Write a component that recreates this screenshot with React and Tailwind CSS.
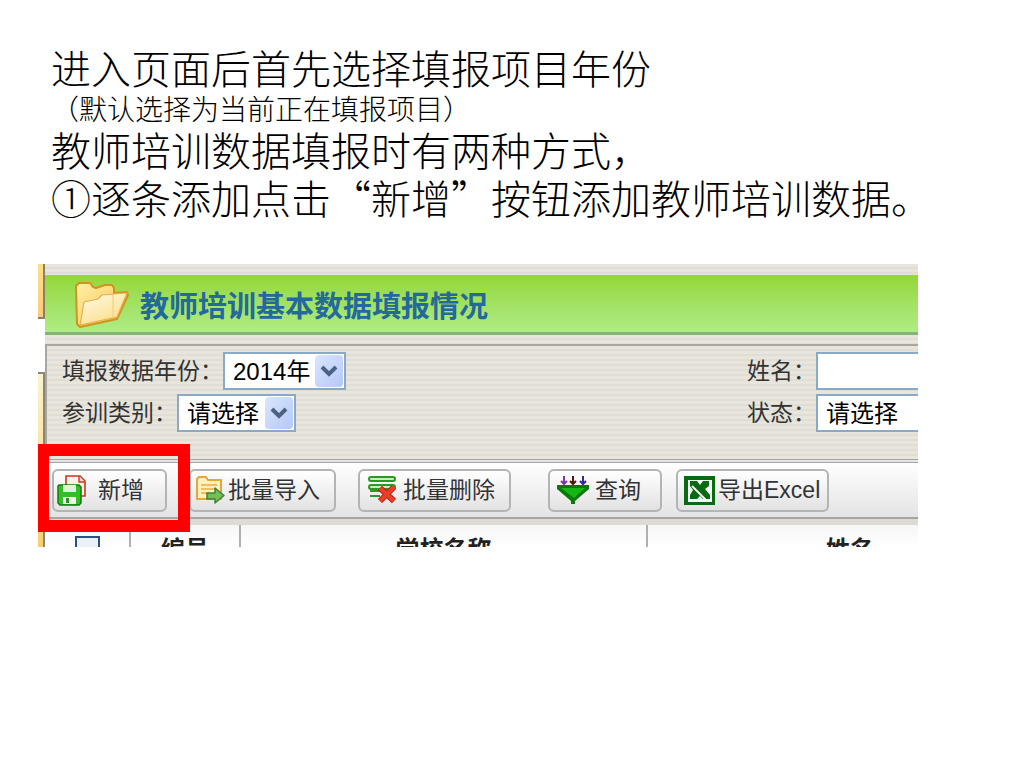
import clsx from 'clsx';

const STRIPES = 'bg-[repeating-linear-gradient(to_bottom,#e8e5dd_0px,#e8e5dd_3px,#e0ddd5_3px,#e0ddd5_5px)]';

function FolderIcon() {
    return (
        <svg width="56" height="48" viewBox="0 0 56 48" aria-hidden="true">
            <defs>
                <linearGradient id="folderBack" x1="0" y1="0" x2="1" y2="1">
                    <stop offset="0" stopColor="#fff0a8" />
                    <stop offset="1" stopColor="#f6bd45" />
                </linearGradient>
                <linearGradient id="folderFront" x1="0" y1="0" x2="0.6" y2="1">
                    <stop offset="0" stopColor="#fffbe8" />
                    <stop offset="1" stopColor="#fddf8c" />
                </linearGradient>
            </defs>
            <path d="M2 5 L5 2 H16 L19 6 L22 7 L31 4 H38 L40 7 V12 L53 11 L54 14 L43 38 L6 46 L3 43 Z" fill="url(#folderBack)" stroke="#cf9420" strokeWidth="2" strokeLinejoin="round" />
            <path d="M10 21 L24 18 L28 14 L53 12 L43 36 L6 44 Z" fill="url(#folderFront)" stroke="#e5b04c" strokeWidth="1.2" strokeLinejoin="round" />
            <path d="M39 14 V36" stroke="#f7d58a" strokeWidth="1.5" />
        </svg>
    );
}

function AddIcon() {
    return (
        <svg width="31" height="32" viewBox="0 0 31 32" aria-hidden="true">
            <path d="M9 2 H23 L28 7 V22 H9 Z" fill="#fff1ea" stroke="#c23a22" strokeWidth="1.6" />
            <path d="M22 2 V8 H28" fill="#fbd9cc" stroke="#c23a22" strokeWidth="1.4" />
            <path d="M2 11 H22 L24 13 V29 L22 31 H3 L1 29 V12 Z" fill="#35bd26" stroke="#137a12" strokeWidth="1.5" />
            <path d="M6 11 H19 V18 H6 Z" fill="#dff3d8" />
            <path d="M6 23 H19 V30 H6 Z" fill="#effbea" />
            <path d="M9 24 H12 V29 H9 Z" fill="#26961b" />
        </svg>
    );
}

function ImportIcon() {
    return (
        <svg width="30" height="28" viewBox="0 0 30 28" aria-hidden="true">
            <path d="M2 23 V3 L4 1 H11 L13 4 H26 V23 Z" fill="#fff0bd" stroke="#e3a73c" strokeWidth="2" strokeLinejoin="round" />
            <path d="M6 9 H22 M6 13 H20 M6 17 H14" stroke="#efbd5a" strokeWidth="1.8" />
            <path d="M12 17 H20 V12 L29 19.500 L20 27 V23 H12 Z" fill="#79bd5b" stroke="#3f8436" strokeWidth="1.5" strokeLinejoin="round" />
        </svg>
    );
}

function DeleteIcon() {
    return (
        <svg width="29" height="30" viewBox="0 0 29 30" aria-hidden="true">
            <g fill="#c9efb9" stroke="#2a9a25" strokeWidth="2">
                <rect x="1" y="2" width="26" height="4" rx="2" />
                <rect x="1" y="10" width="26" height="4" rx="2" />
                <path d="M2 16 H14 M2 21 H12" />
            </g>
            <path d="M12 13 L26 26 M26 12 L12 26" stroke="#b51f12" strokeWidth="6" />
            <path d="M12 13 L26 26 M26 12 L12 26" stroke="#ea3e26" strokeWidth="4" />
        </svg>
    );
}

function FilterIcon() {
    return (
        <svg width="32" height="28" viewBox="0 0 32 28" aria-hidden="true">
            <path d="M0 9 H32 V13 L18 25 V28 H14 V25 L0 13 Z" fill="#087a0c" />
            <path d="M4 12 H28 L17 22 Z" fill="#14b814" />
            <g strokeWidth="2" fill="none">
                <path d="M7 0 V8 M4 5 L7 8 L10 5" stroke="#7c35b5" />
                <path d="M16 0 V8 M13 5 L16 8 L19 5" stroke="#4d1717" />
                <path d="M26 0 V8 M23 5 L26 8 L29 5" stroke="#2c2c9c" />
            </g>
        </svg>
    );
}

function ExcelIcon() {
    return (
        <svg width="31" height="29" viewBox="0 0 31 29" aria-hidden="true">
            <rect width="31" height="29" fill="#0a6a12" />
            <rect x="4" y="4" width="24" height="22" fill="#f3faf2" />
            <path d="M6 5 H13 L16 9 L19 5 H25 V10 L21 13 L26 19 V23 H19 L16 20 L13 23 H6 V19 L9 14 L6 10 Z" fill="#0a6a12" />
            <path d="M8 10 L22 24 M24 24 H28" stroke="#f3faf2" strokeWidth="1.8" />
        </svg>
    );
}

function SelectBox({ id, value, className }) {
    return (
        <div className={clsx('relative shrink-0', className)}>
            <select id={id} className="block h-[38px] w-full appearance-none border-2 border-[#8aa9c6] bg-white pt-[2px] pl-2 text-[24px] leading-8 text-black">
                <option>{value}</option>
            </select>
            <span className="pointer-events-none absolute top-[3px] right-[3px] flex h-8 w-7 items-center justify-center rounded-sm bg-linear-to-br from-[#dbe6fd] to-[#b3c8f6]">
                <svg width="18" height="12" viewBox="0 0 18 12" aria-hidden="true">
                    <path d="M2 2 L9 9 L16 2" fill="none" stroke="#4d6185" strokeWidth="4" />
                </svg>
            </span>
        </div>
    );
}

function ToolButton({ icon, label, className }) {
    return (
        <button
            type="button"
            className={clsx(
                'flex h-[43px] shrink-0 items-center rounded-md border-2 border-[#b4b4b4] bg-linear-to-b from-white to-[#e2e2e2] text-[23px] leading-8 whitespace-nowrap text-[#333]',
                className
            )}
        >
            {icon}
            {label}
        </button>
    );
}

export default function App() {
    return (
        <main lang="zh-CN" className="min-h-screen overflow-hidden bg-white font-['Noto_Sans_CJK_SC',sans-serif] text-black">
            {/* 操作说明 */}
            <section className="pt-[43px] pl-[51px] text-[40px] leading-[48px] font-light whitespace-nowrap">
                <h1>进入页面后首先选择填报项目年份</h1>
                <p className="text-[28px] leading-[34px]">（默认选择为当前正在填报项目）</p>
                <p>教师培训数据填报时有两种方式，</p>
                <p>①逐条添加点击“新增”按钮添加教师培训数据。</p>
            </section>

            <section className="relative mt-[43px] mr-[106px] ml-[38px] flex overflow-hidden font-['Liberation_Sans','Noto_Sans_CJK_SC',sans-serif]">
                {/* 左侧菜单边缘 */}
                <div className="flex w-[7px] shrink-0 flex-col">
                    <div className="h-[55px] border-r-2 border-b-2 border-[#8d8062] bg-linear-to-b from-[#fbe08a] to-[#fbcb7c]" />
                    <div className="h-[53px]" />
                    <div className="grow border-t-2 border-r-2 border-[#89857a] bg-linear-to-b from-[#f9f4cd] to-[#f8cf6e]" />
                </div>

                <div className="min-w-0 grow">
                    <div className={clsx('h-[11px]', STRIPES)} />
                    <header className="flex h-[60px] items-center gap-[10px] border-b-3 border-[#84b47c] bg-linear-to-b from-[#94d733] to-[#afec85] pt-[2px] pl-[29px]">
                        <FolderIcon />
                        <h2 className="pt-1 text-[29px] leading-9 font-bold whitespace-nowrap text-[#24699c]">教师培训基本数据填报情况</h2>
                    </header>
                    <div className={clsx('h-[9px]', STRIPES)} />

                    <form className={clsx('flex h-[115px] justify-between border-t-2 border-l-2 border-[#aaa69e] pt-[6px] pl-[15px] text-[23px] whitespace-nowrap text-[#333]', STRIPES)}>
                        <div className="flex flex-col gap-1">
                            <div className="flex items-center">
                                <label htmlFor="year">填报数据年份：</label>
                                <SelectBox id="year" value="2014年" className="w-[123px]" />
                            </div>
                            <div className="flex items-center">
                                <label htmlFor="category">参训类别：</label>
                                <SelectBox id="category" value="请选择" className="w-[119px]" />
                            </div>
                        </div>
                        <div className="flex flex-col gap-1">
                            <div className="flex items-center">
                                <label htmlFor="name">姓名：</label>
                                <input id="name" type="text" className="h-[38px] w-[102px] border-2 border-r-0 border-[#8aa9c6] bg-white px-2 text-[24px]" />
                            </div>
                            <div className="flex items-center">
                                <label htmlFor="status">状态：</label>
                                <select id="status" className="h-[38px] w-[102px] appearance-none border-2 border-r-0 border-[#8aa9c6] bg-white pt-[2px] pl-2 text-[24px] leading-8 text-black">
                                    <option>请选择</option>
                                </select>
                            </div>
                        </div>
                    </form>

                    <div className="flex h-[60px] items-center gap-[37px] border-t-4 border-b-2 border-double border-[#a5a5a5] bg-linear-to-b from-white to-[#e4e4e4] pl-[7px]">
                        <div className="flex gap-[22px]">
                            <ToolButton icon={<AddIcon />} label="新增" className="w-[115px] gap-[10px] pl-[3px]" />
                            <ToolButton icon={<ImportIcon />} label="批量导入" className="w-[147px] gap-[3px] pl-1" />
                            <ToolButton icon={<DeleteIcon />} label="批量删除" className="w-[153px] gap-[6px] pl-2" />
                        </div>
                        <div className="flex gap-[14px]">
                            <ToolButton icon={<FilterIcon />} label="查询" className="w-[114px] gap-[6px] pl-[7px]" />
                            <ToolButton icon={<ExcelIcon />} label="导出Excel" className="w-[153px] gap-[3px] pl-[6px]" />
                        </div>
                    </div>
                    <div className="h-[6px] bg-[#dedbd5]" />

                    {/* 表头只露出上半部分 */}
                    <div className="h-[22px] overflow-hidden bg-linear-to-b from-[#f6f6f6] to-white">
                        <table className="w-full table-fixed border-collapse text-[24px] leading-8 text-[#222]">
                            <thead>
                                <tr className="align-top">
                                    <th className="w-[85px] border-r-2 border-[#b0b0b0] pt-[11px]">
                                        <input type="checkbox" aria-label="全选" className="mx-auto block size-[25px] appearance-none border-2 border-[#2a5280] bg-[#edf1f5]" />
                                    </th>
                                    <th className="w-[110px] border-r-2 border-[#b0b0b0] pt-[9px]">编号</th>
                                    <th className="w-[407px] border-r-2 border-[#b0b0b0] pt-[9px]">学校名称</th>
                                    <th className="pt-[9px] pl-[178px] text-left">姓名</th>
                                </tr>
                            </thead>
                        </table>
                    </div>
                </div>

                {/* 红框标注“新增”按钮 */}
                <div className="pointer-events-none absolute top-[180px] -left-px h-[88px] w-[153px] border-[12px] border-[#fe0000]" />
            </section>
        </main>
    );
}
